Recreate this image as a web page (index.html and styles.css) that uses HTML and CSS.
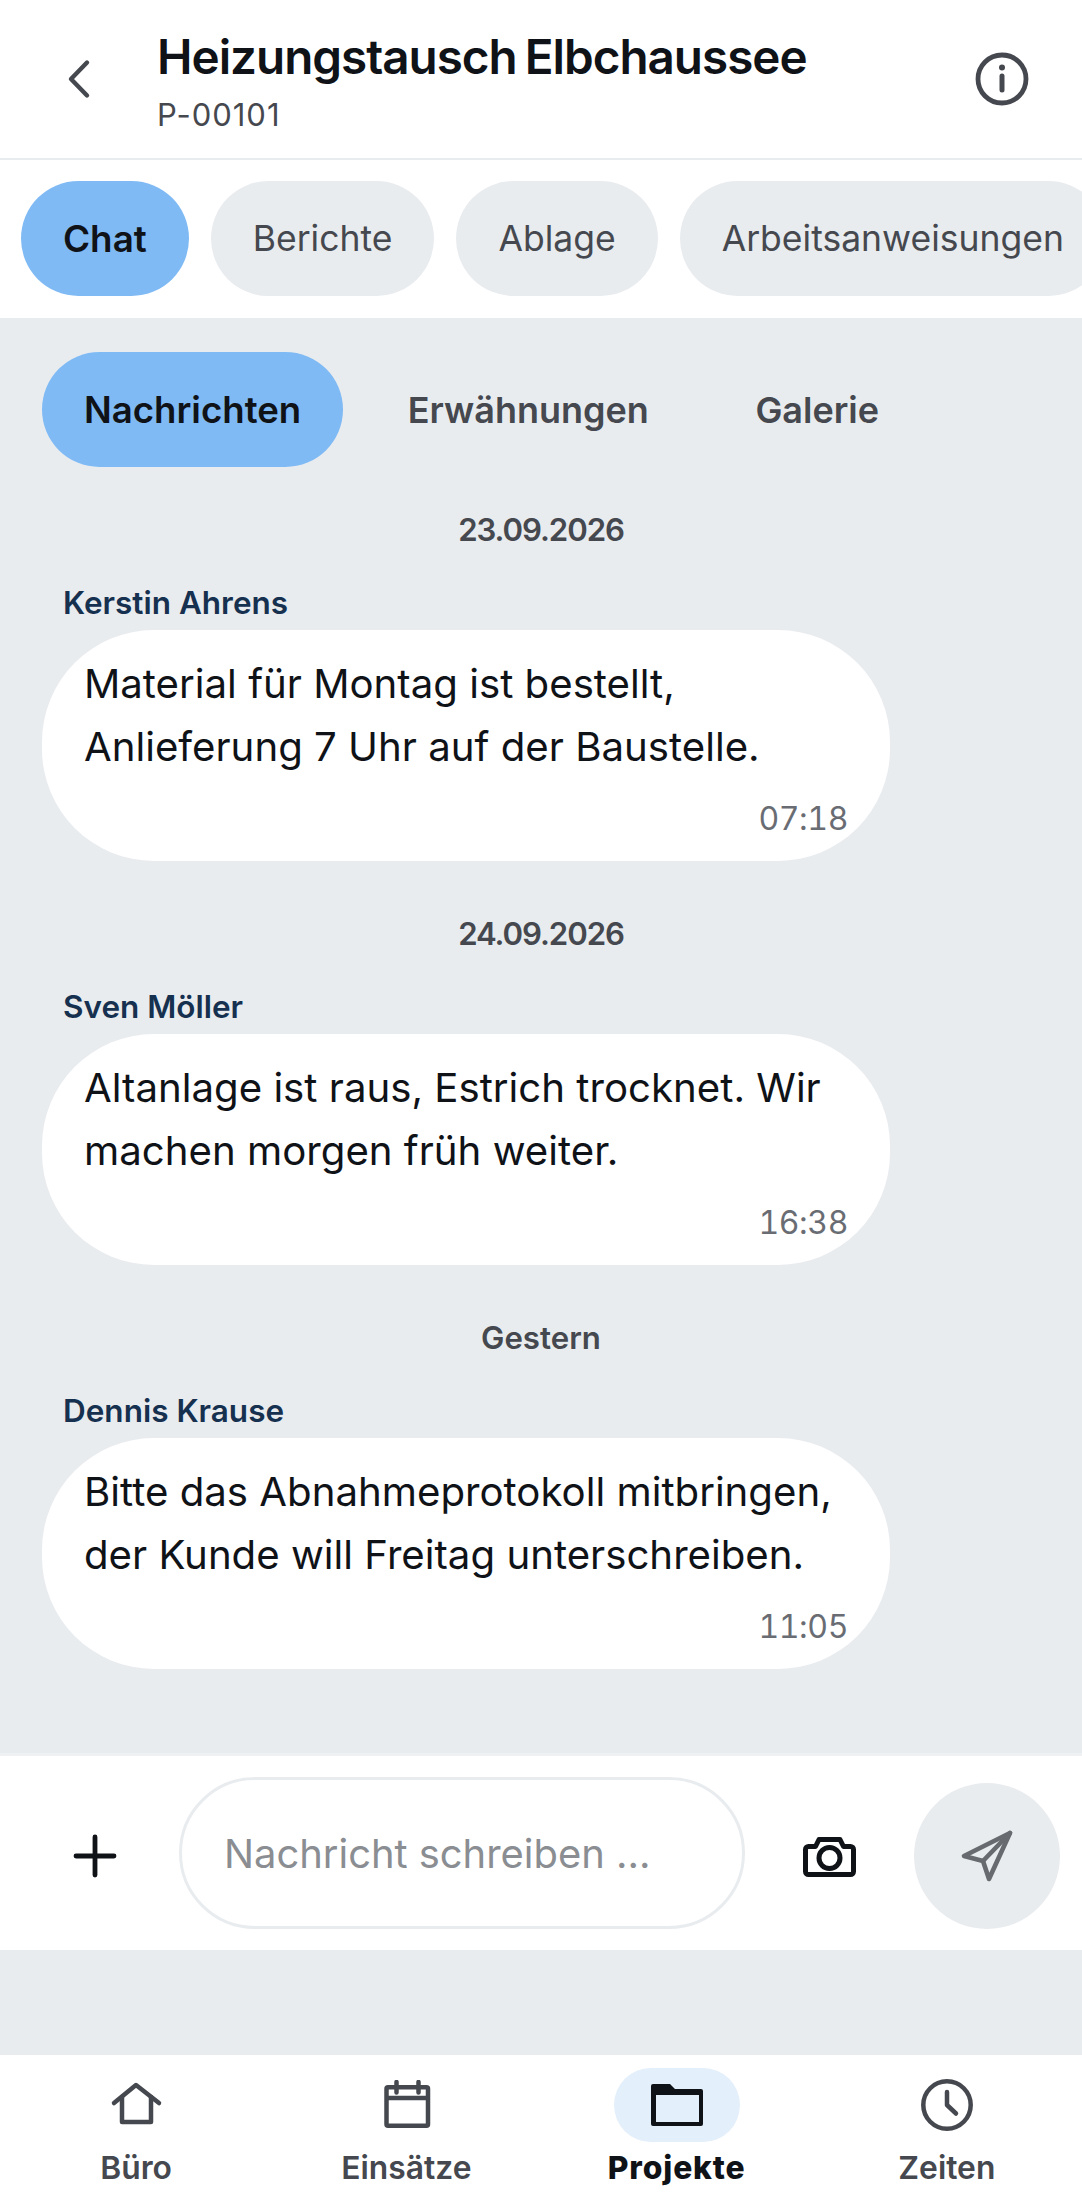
FILE: index.html
```html
<!DOCTYPE html>
<html lang="de">
  <head>
    <meta charset="UTF-8" />
    <meta name="viewport" content="width=device-width, initial-scale=1.0" />
    <title>Heizungstausch Elbchaussee</title>
    <link rel="stylesheet" href="styles.css">
  </head>
  <body>
    <div class="app">
      <header class="top-bar">
        <button class="icon-btn back-btn" aria-label="Zurück">
          <svg viewBox="0 0 28 40" width="28" height="40" fill="none" stroke="#45484e" stroke-width="4.4" stroke-linecap="round" stroke-linejoin="round"><path d="M23 3.5 7 20l16 16.5"/></svg>
        </button>
        <div class="top-title">
          <h1>Heizungstausch Elbchaussee</h1>
          <p>P-00101</p>
        </div>
        <button class="icon-btn info-btn" aria-label="Info">
          <svg viewBox="0 0 56 56" width="56" height="56" fill="none" stroke="#45484e" stroke-width="4.8" stroke-linecap="round"><circle cx="28" cy="28" r="24"/><path d="M28 25v14" stroke-width="5"/><circle cx="28" cy="16.5" r="3" fill="#45484e" stroke="none"/></svg>
        </button>
      </header>

      <nav class="tabs">
        <a class="pill pill-active">Chat</a>
        <a class="pill">Berichte</a>
        <a class="pill">Ablage</a>
        <a class="pill">Arbeitsanweisungen</a>
      </nav>

      <main class="chat">
        <div class="sub-tabs">
          <a class="sub-tab sub-tab-active">Nachrichten</a>
          <a class="sub-tab">Erwähnungen</a>
          <a class="sub-tab">Galerie</a>
        </div>

        <div class="day day-date">23.09.2026</div>
        <div class="sender">Kerstin Ahrens</div>
        <div class="bubble">
          <p>Material für Montag ist bestellt,<br>Anlieferung 7 Uhr auf der Baustelle.</p>
          <time>07:18</time>
        </div>

        <div class="day day-date">24.09.2026</div>
        <div class="sender">Sven Möller</div>
        <div class="bubble">
          <p>Altanlage ist raus, Estrich trocknet. Wir<br>machen morgen früh weiter.</p>
          <time>16:38</time>
        </div>

        <div class="day">Gestern</div>
        <div class="sender">Dennis Krause</div>
        <div class="bubble">
          <p>Bitte das Abnahmeprotokoll mitbringen,<br>der Kunde will Freitag unterschreiben.</p>
          <time>11:05</time>
        </div>
      </main>

      <div class="composer">
        <button class="icon-btn plus-btn" aria-label="Anhang">
          <svg viewBox="0 0 44 44" width="44" height="44" fill="none" stroke="#0f1217" stroke-width="4.8" stroke-linecap="round"><path d="M22 3v38M3 22h38"/></svg>
        </button>
        <div class="message-input">Nachricht schreiben ...</div>
        <button class="icon-btn camera-btn" aria-label="Kamera">
          <svg viewBox="0 0 56 44" width="56" height="44" fill="none" stroke="#0f1217" stroke-width="5" stroke-linejoin="round"><path d="M7.5 11.5h7l3.5-7h21l3.5 7h7a3 3 0 0 1 3 3v22a3 3 0 0 1-3 3h-42a3 3 0 0 1-3-3v-22a3 3 0 0 1 3-3Z"/><circle cx="28.5" cy="23" r="10.5"/></svg>
        </button>
        <button class="send-btn" aria-label="Senden">
          <svg viewBox="0 0 60 60" width="60" height="60" fill="none" stroke="#676a6e" stroke-width="4.6" stroke-linejoin="round" stroke-linecap="round"><path d="M53 7 7 30l19 5 6 18Z"/><path d="M53 7 26 35"/></svg>
        </button>
      </div>

      <div class="spacer"></div>

      <footer class="bottom-nav">
        <a class="nav-item">
          <span class="nav-icon">
            <svg viewBox="0 0 56 50" width="56" height="50" fill="none" stroke="#45484e" stroke-width="4.5" stroke-linecap="round" stroke-linejoin="round"><path d="M6 23 28 5l23 18"/><path d="M14 17v25h29V17"/></svg>
          </span>
          <span>Büro</span>
        </a>
        <a class="nav-item">
          <span class="nav-icon">
            <svg viewBox="0 0 50 50" width="50" height="50" fill="none" stroke="#45484e" stroke-width="4.5" stroke-linejoin="round"><rect x="5.5" y="7.3" width="41.5" height="38.4" rx="1.5"/><path d="M5.5 18H47"/><path d="M15.5 2v10.5M37.5 2v10.5" stroke-linecap="round"/></svg>
          </span>
          <span>Einsätze</span>
        </a>
        <a class="nav-item nav-item-active">
          <span class="nav-icon">
            <svg viewBox="0 0 54 44" width="54" height="44"><path fill="#0f1217" fill-rule="evenodd" d="M3 1h17l5 5h26a2 2 0 0 1 2 2v33a2 2 0 0 1-2 2H3a2 2 0 0 1-2-2V3a2 2 0 0 1 2-2ZM6 12v27h43V12Z"/></svg>
          </span>
          <span>Projekte</span>
        </a>
        <a class="nav-item">
          <span class="nav-icon">
            <svg viewBox="0 0 54 54" width="54" height="54" fill="none" stroke="#45484e" stroke-width="4.5" stroke-linecap="round" stroke-linejoin="round"><circle cx="27" cy="27" r="23.7"/><path d="M27 14v13l9 8.5"/></svg>
          </span>
          <span>Zeiten</span>
        </a>
      </footer>
    </div>
  </body>
</html>
```

FILE: styles.css
```css
* {
  margin: 0;
  padding: 0;
  box-sizing: border-box;
  font-family: Inter, "Liberation Sans", sans-serif;
}

html,
body {
  height: 100%;
}

body {
  background-color: #e9ecef;
  overflow: hidden;
}

.app {
  display: flex;
  flex-direction: column;
  height: 2202px;
}

button {
  border: none;
  background: none;
}

.icon-btn {
  display: flex;
  align-items: center;
  justify-content: center;
  flex: none;
}

/* top bar */
.top-bar {
  display: flex;
  align-items: center;
  height: 160px;
  padding: 0 0 0 64px;
  background-color: white;
  border-bottom: 2px solid #e9ecef;
}

.back-btn {
  width: 28px;
  margin-right: 65px;
}

.top-title {
  flex: 1;
  padding-top: 4px;
}

.top-title h1 {
  font-size: 47.6px;
  line-height: 56px;
  font-weight: 600;
  letter-spacing: -1px;
  word-spacing: -3px;
  color: #0f1217;
}

.top-title p {
  margin-top: 11px;
  font-size: 31px;
  line-height: 38px;
  letter-spacing: 1px;
  color: #45484e;
}

.info-btn {
  margin-right: 52px;
}

/* tabs */
.tabs {
  display: flex;
  gap: 22px;
  height: 158px;
  padding: 21px 0 22px 21px;
  background-color: white;
  overflow: hidden;
}

.pill {
  flex: none;
  display: flex;
  align-items: center;
  height: 115px;
  padding: 0 42px;
  border-radius: 58px;
  background-color: #e9ecef;
  font-size: 35.5px;
  color: #45484e;
}

.pill-active {
  background-color: #7fbaf5;
  font-size: 36.8px;
  font-weight: 600;
  color: #0f1217;
}

/* chat area */
.chat {
  padding: 34px 42px 0;
  height: 1435px;
  flex: none;
}

.sub-tabs {
  display: flex;
  gap: 22.5px;
  margin-bottom: 46px;
}

.sub-tab {
  display: flex;
  align-items: center;
  height: 115px;
  padding: 0 42px;
  border-radius: 58px;
  font-size: 36px;
  font-weight: 600;
  color: #45484e;
}

.sub-tab-active {
  background-color: #7fbaf5;
  font-size: 36.6px;
  color: #0f1217;
}

.day {
  height: 34px;
  margin-bottom: 38px;
  font-size: 31.2px;
  line-height: 34px;
  font-weight: 600;
  text-align: center;
  color: #45484e;
}

.day-date {
  letter-spacing: -1.1px;
}

.sender {
  height: 36px;
  margin: 0 0 9px 21px;
  font-size: 31.5px;
  line-height: 36px;
  font-weight: 600;
  color: #16304f;
}

.bubble {
  width: 848px;
  height: 231px;
  margin-bottom: 56px;
  padding: 23px 42px 0;
  border-radius: 112px;
  background-color: white;
}

.bubble p {
  font-size: 40.2px;
  line-height: 62.5px;
  color: #0f1217;
}

.bubble time {
  display: block;
  margin-top: 21px;
  font-size: 32px;
  line-height: 40px;
  text-align: right;
  letter-spacing: -0.4px;
  font-variant-numeric: tabular-nums;
  color: #696d73;
}

/* composer */
.composer {
  display: flex;
  align-items: center;
  height: 197px;
  flex: none;
  padding-left: 73px;
  background-color: white;
  border-top: 3px solid #eef0f2;
}

.plus-btn {
  margin: 6px 62px 0 0;
}

.message-input {
  display: flex;
  align-items: center;
  width: 566px;
  height: 152px;
  margin: 0 56px 0 0;
  padding: 0 42px 0;
  border: 3px solid #e9ecef;
  border-radius: 76px;
  font-size: 39.9px;
  color: #8a8d91;
}

.camera-btn {
  margin: 8px 57px 0 0;
  width: 56px;
}

.send-btn {
  display: flex;
  align-items: center;
  justify-content: center;
  flex: none;
  width: 146px;
  height: 146px;
  margin-top: 6px;
  border-radius: 50%;
  background-color: #e9ecef;
}

.spacer {
  flex: 1;
}

/* bottom nav */
.bottom-nav {
  display: grid;
  grid-template-columns: repeat(4, 1fr);
  height: 147px;
  flex: none;
  padding-left: 1px;
  background-color: white;
}

.nav-item {
  display: flex;
  flex-direction: column;
  align-items: center;
  padding-top: 13px;
  font-size: 31.8px;
  font-weight: 600;
  color: #45484e;
}

.nav-icon {
  display: flex;
  align-items: center;
  justify-content: center;
  width: 126px;
  height: 74px;
  margin-bottom: 6px;
  border-radius: 37px;
}

.nav-item-active {
  font-weight: 800;
  letter-spacing: 0.9px;
  color: #0f1217;
}

.nav-item-active .nav-icon {
  background-color: #e3effb;
}
```
